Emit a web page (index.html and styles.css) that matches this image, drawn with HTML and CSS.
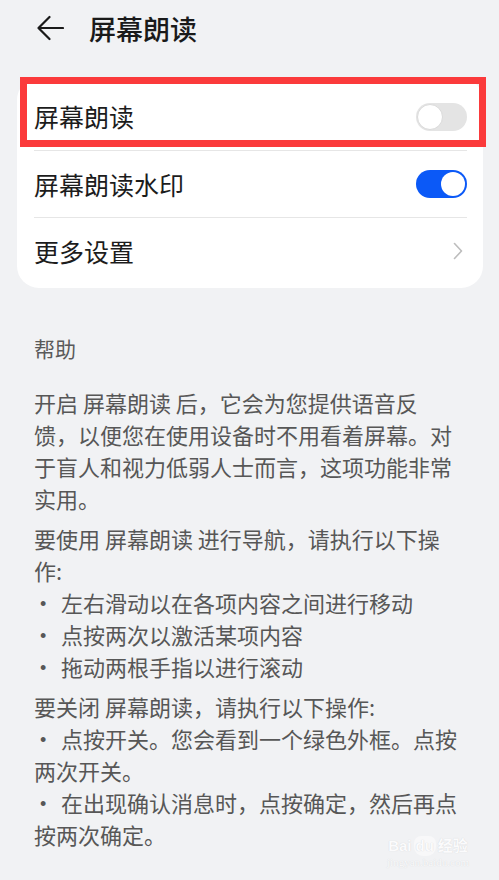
FILE: index.html
```html
<!DOCTYPE html>
<html lang="zh-CN">
<head>
<meta charset="utf-8">
<title>屏幕朗读</title>
<link rel="stylesheet" href="styles.css">
</head>
<body>
<header class="topbar">
  <svg class="back" width="28" height="26" viewBox="0 0 28 26" aria-hidden="true">
    <path d="M27 13 H2.5 M13.5 2 L2.5 13 L13.5 24" fill="none" stroke="#1a1a1a" stroke-width="2.2" stroke-linecap="round" stroke-linejoin="round"/>
  </svg>
  <h1 class="title">屏幕朗读</h1>
</header>

<section class="card">
  <div class="row">
    <span class="label">屏幕朗读</span>
    <span class="switch switch-off"><span class="knob"></span></span>
  </div>
  <div class="row">
    <span class="label">屏幕朗读水印</span>
    <span class="switch switch-on"><span class="knob"></span></span>
  </div>
  <div class="row">
    <span class="label">更多设置</span>
    <svg class="chev" width="10" height="18" viewBox="0 0 10 18" aria-hidden="true">
      <path d="M1.5 1.5 L8.5 9 L1.5 16.5" fill="none" stroke="#bdbdbd" stroke-width="1.6" stroke-linecap="round" stroke-linejoin="round"/>
    </svg>
  </div>
  <div class="highlight"></div>
</section>

<section class="help">
  <h2 class="help-title">帮助</h2>
  <p class="para">开启 屏幕朗读 后，它会为您提供语音反馈，以便您在使用设备时不用看着屏幕。对于盲人和视力低弱人士而言，这项功能非常实用。</p>
  <div class="para">
    <div>要使用 屏幕朗读 进行导航，请执行以下操作:</div>
    <div class="item"><span class="dot">•</span>左右滑动以在各项内容之间进行移动</div>
    <div class="item"><span class="dot">•</span>点按两次以激活某项内容</div>
    <div class="item"><span class="dot">•</span>拖动两根手指以进行滚动</div>
  </div>
  <div class="para">
    <div>要关闭 屏幕朗读，请执行以下操作:</div>
    <div class="item"><span class="dot">•</span>点按开关。您会看到一个绿色外框。点按两次开关。</div>
    <div class="item"><span class="dot">•</span>在出现确认消息时，点按确定，然后再点按两次确定。</div>
  </div>
</section>

<div class="watermark">
  <div class="wm-logo">Bai<span class="wm-du">du</span>经验</div>
  <div class="wm-url">jingyan.baidu.com</div>
</div>
</body>
</html>
```

FILE: styles.css
```css
* {
  box-sizing: border-box;
}

html, body {
  margin: 0;
  padding: 0;
}

body {
  width: 499px;
  min-height: 880px;
  background: #f1f2f4;
  font-family: "Noto Sans CJK SC", "Noto Sans", sans-serif;
  color: #1c1c1c;
  position: relative;
  overflow: hidden;
}

.topbar {
  height: 56px;
  display: flex;
  align-items: center;
  gap: 25px;
  padding-left: 36px;
}

.back {
  display: block;
  flex: none;
}

.title {
  margin: 0;
  font-size: 27px;
  font-weight: 500;
  line-height: 1;
  color: #1a1a1a;
}

.card {
  position: relative;
  margin: 22px 16px 0 17px;
  background: #ffffff;
  border-radius: 22px;
  padding: 5px 16px 4px 17px;
}

.row {
  height: 67px;
  display: flex;
  align-items: center;
  justify-content: space-between;
}

.row + .row {
  border-top: 1px solid #e6e6e6;
}

.label {
  font-size: 25px;
  line-height: 1;
  color: #1c1c1c;
}

.switch {
  position: relative;
  display: block;
  width: 51px;
  height: 28px;
  border-radius: 14px;
  flex: none;
}

.switch-off {
  background: #e4e4e4;
}

.switch-off .knob {
  position: absolute;
  left: 1px;
  top: 1px;
  width: 26px;
  height: 26px;
  border-radius: 50%;
  background: #ffffff;
  border: 1px solid #dadada;
}

.switch-on {
  background: #0b59f7;
}

.switch-on .knob {
  position: absolute;
  right: 2px;
  top: 2px;
  width: 24px;
  height: 24px;
  border-radius: 50%;
  background: #ffffff;
}

.chev {
  display: block;
  margin-right: 4px;
}

.highlight {
  position: absolute;
  left: 3px;
  top: -1px;
  width: 466px;
  height: 70px;
  border: 7px solid #fb3a3b;
  pointer-events: none;
}

.help {
  margin-top: 45px;
  padding-left: 34px;
  width: 459px;
}

.help-title {
  margin: 0 0 23px;
  font-size: 21px;
  font-weight: 400;
  line-height: 30px;
  color: #5a5a5a;
}

.para {
  margin: 0 0 8px;
  font-size: 22px;
  line-height: 32px;
  color: #575757;
}

.item {
  margin: 0;
  height: auto;
}

.dot {
  display: inline-block;
  width: 27px;
  padding-left: 6px;
  font-family: "Liberation Sans", sans-serif;
  font-size: 18px;
  line-height: 1;
  vertical-align: 2px;
}

.watermark {
  position: absolute;
  left: 380px;
  top: 836px;
  width: 96px;
  text-align: center;
  white-space: nowrap;
  pointer-events: none;
}

.wm-logo {
  font-family: "Liberation Sans", "Noto Sans CJK SC", sans-serif;
  font-size: 15px;
  font-weight: 700;
  line-height: 20px;
  color: #fbfbfc;
  text-shadow: 0 0 1px #cfd0d3;
}

.wm-du {
  display: inline-block;
  background: #f8f8f9;
  border-radius: 7px 7px 9px 9px;
  padding: 0 2px;
  margin: 0 2px;
}

.wm-url {
  font-family: "Liberation Serif", serif;
  font-size: 11px;
  line-height: 13px;
  color: #fafafb;
  text-shadow: 0 0 1px #cfd0d3;
}
```
